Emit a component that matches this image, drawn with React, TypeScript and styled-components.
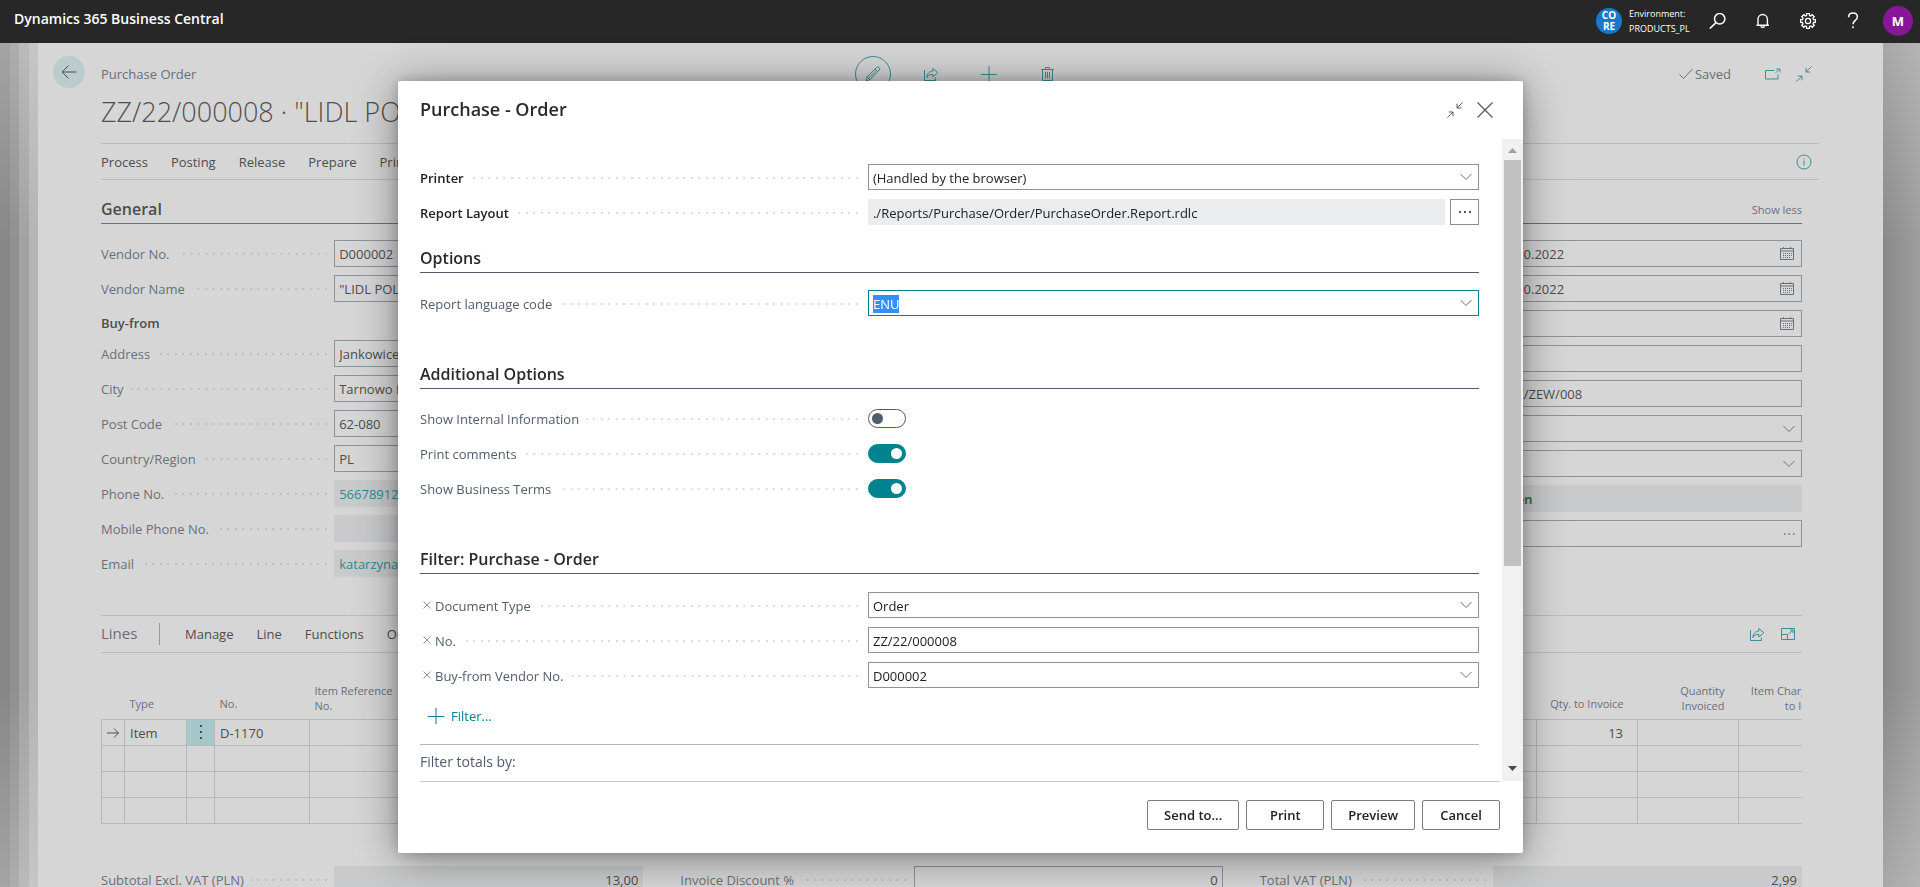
import React, { useEffect, useRef } from "react";
import styled, { createGlobalStyle, css } from "styled-components";

const GlobalStyle = createGlobalStyle`
  * { box-sizing: border-box; }
  html, body { margin: 0; height: 100%; }
  body {
    font-family: "Open Sans", "Noto Sans", "Segoe UI", sans-serif;
    font-size: 13px;
    line-height: 18px;
    color: #212121;
    background: #8a8a8a;
  }
  button, input, select { font: inherit; color: inherit; margin: 0; }
  button { cursor: pointer; }
  h1, h2, h3, p { margin: 0; font-weight: 400; }
`;

const Shell = styled.div`
  height: 100vh;
  min-height: 640px;
  overflow: hidden;
  display: flex;
  flex-direction: column;
`;

/* ---------- top bar ---------- */

const TopBar = styled.header`
  flex: none;
  height: 43px;
  padding: 0 7px 0 14px;
  background: #272727;
  color: #fff;
  display: flex;
  align-items: center;
  justify-content: space-between;
`;

const Product = styled.a`
  color: #fff;
  text-decoration: none;
  font-size: 14px;
  font-weight: 600;
  padding-bottom: 5px;
`;

const TopRight = styled.div`
  display: flex;
  align-items: center;
  padding-bottom: 2px;
`;

const EnvBadge = styled.span`
  width: 26px;
  height: 26px;
  border-radius: 50%;
  background: #1a78c8;
  font-size: 10px;
  line-height: 11px;
  font-weight: 700;
  text-align: center;
  padding-top: 2px;
`;

const EnvText = styled.span`
  width: 60px;
  margin: 0 6px 0 7px;
  font-size: 9px;
  line-height: 15px;
  white-space: nowrap;
`;

const TopButton = styled.button`
  width: 45px;
  height: 40px;
  padding: 0;
  border: 0;
  background: none;
  color: #fff;
  display: grid;
  place-items: center;
`;

const Avatar = styled.button`
  width: 30px;
  height: 30px;
  margin-left: 8px;
  padding: 0;
  border: 0;
  border-radius: 50%;
  background: #881798;
  color: #fff;
  font-weight: 700;
`;

/* ---------- page behind the dialog ---------- */

const Stage = styled.div`
  flex: 1;
  min-height: 0;
  display: flex;
`;

const Stack = styled.div`
  display: flex;
`;

const StackedSheet = styled.div<{ $edge: string; $mid: string; $w: number }>`
  width: ${(p) => p.$w}px;
  background: linear-gradient(${(p) => `${p.$edge}, ${p.$mid} 200px, ${p.$mid} calc(100% - 200px), ${p.$edge}`});
`;

const RightEdge = styled.div`
  width: 37px;
  background:
    linear-gradient(rgba(214, 214, 214, 0.4), rgba(214, 214, 214, 0) 200px, rgba(214, 214, 214, 0) calc(100% - 200px), rgba(214, 214, 214, 0.4)),
    linear-gradient(to right, #898989, #9e9e9e);
`;

const Sheet = styled.main`
  flex: 1;
  min-width: 0;
  background: #d6d6d6;
  color: #4d4d4d;
  padding: 13px 64px 0 15px;
  display: flex;
  align-items: flex-start;
`;

const BackButton = styled.button`
  flex: none;
  width: 32px;
  height: 32px;
  margin-right: 16px;
  padding: 0;
  border: 0;
  border-radius: 50%;
  background: #bccccd;
  color: #4b5054;
  display: grid;
  place-items: center;
`;

const Content = styled.div`
  flex: 1;
  min-width: 0;
`;

const HeadRow = styled.div`
  display: grid;
  grid-template-columns: 1fr auto 1fr;
  align-items: center;
  height: 36px;
  color: #6a6f78;
`;

const HeadTools = styled.div`
  display: flex;
  align-items: center;
  gap: 22px;
`;

const IconButton = styled.button<{ $round?: boolean }>`
  width: 36px;
  height: 36px;
  padding: 0;
  background: none;
  border: 0;
  color: #3e8e92;
  display: grid;
  place-items: center;
  ${(p) => p.$round && css`
    border: 1px solid #3e8e92;
    border-radius: 50%;
  `}
`;

const SmallIconButton = styled(IconButton)`
  width: 31px;
  height: 31px;
`;

const HeadStatus = styled.div`
  display: flex;
  align-items: center;
  justify-content: flex-end;
`;

const Saved = styled.span`
  display: flex;
  align-items: center;
  gap: 2px;
  margin-right: 26px;
`;

const PageTitle = styled.h1`
  font-size: 27px;
  font-weight: 300;
  line-height: 40px;
  white-space: nowrap;
  overflow: hidden;
  color: #505050;
`;

const ActionBar = styled.nav`
  margin-top: 11px;
  height: 37px;
  border-top: 1px solid #bbbcbd;
  border-bottom: 1px solid #bbbcbd;
  display: flex;
  align-items: center;
  justify-content: space-between;
`;

const Menu = styled.div`
  display: flex;
  gap: 23px;
`;

const MenuItem = styled.button`
  padding: 0;
  border: 0;
  background: none;
  white-space: nowrap;
`;

const Inner = styled.div`
  margin-right: 17px;
`;

const TabHead = styled.div`
  height: 44px;
  padding-top: 16px;
  border-bottom: 1px solid #6c717a;
  display: flex;
  justify-content: space-between;
`;

const TabTitle = styled.h2`
  font-size: 16px;
  font-weight: 600;
  line-height: 26px;
`;

const ShowLess = styled.button`
  padding: 0;
  border: 0;
  background: none;
  font-size: 11px;
  line-height: 28px;
  color: #6a6f78;
`;

const ThreeColumns = styled.div`
  display: grid;
  grid-template-columns: repeat(3, minmax(0, 1fr));
  column-gap: 37px;
`;

const FieldColumn = styled.div`
  display: flex;
  flex-direction: column;
  gap: 8px;
`;

const GroupTitle = styled.h3`
  height: 22px;
  font-size: 13px;
  font-weight: 600;
  line-height: 26px;
`;

/* ---------- fields, used by both the page and the dialog ---------- */

const FieldRow = styled.div<{ $dialog?: boolean }>`
  display: grid;
  grid-template-columns: ${(p) => (p.$dialog ? "423fr 577fr" : "43fr 57fr")};
  align-items: center;
  height: ${(p) => (p.$dialog ? 26 : 27)}px;
`;

const LabelCell = styled.div<{ $dialog?: boolean }>`
  min-width: 0;
  display: flex;
  align-items: center;
  gap: 7px;
  padding-right: ${(p) => (p.$dialog ? 10 : 7)}px;
  padding-top: ${(p) => (p.$dialog ? 2 : 1)}px;
  color: ${(p) => (p.$dialog ? "#505c6d" : "#6a7078")};
  white-space: nowrap;
`;

const Label = styled.label<{ $strong?: boolean }>`
  ${(p) => p.$strong && css`
    font-weight: 600;
    color: #212121;
  `}
`;

/* Leader dots: two per 15px tile, counted from the right edge. */
const Dots = styled.span<{ $dialog?: boolean }>`
  flex: 1;
  height: 2px;
  color: ${(p) => (p.$dialog ? "#d9dbde" : "#bdbec0")};
  background: linear-gradient(
      to right,
      transparent 5px,
      currentColor 5px 7px,
      transparent 7px 13px,
      currentColor 13px 15px
    )
    right top / 15px 2px repeat-x;
`;

const Control = styled.div`
  position: relative;
  min-width: 0;
  height: 100%;
  display: flex;
  gap: 5px;
`;

type Tone = "dim" | "plain" | "active" | "filled" | "dimFilled";

const boxStyle = css<{ $tone?: Tone; $right?: boolean }>`
  flex: 1;
  width: 100%;
  min-width: 0;
  height: 100%;
  padding: 1px 4px 0;
  border-radius: 0;
  outline: 0;
  appearance: none;
  background: transparent;
  border: 1px solid #8c93a0;
  text-align: ${(p) => (p.$right ? "right" : "left")};
  ${(p) => p.$tone === "dim" && css`border-color: #8e9299;`}
  ${(p) => p.$tone === "active" && css`border-color: #00838f;`}
  ${(p) => p.$tone === "filled" && css`border-color: #ebecee; background: #ebecee;`}
  ${(p) => p.$tone === "dimFilled" && css`border-color: #c9cacc; background: #c9cacc;`}
`;

const TextBox = styled.input<{ $tone?: Tone; $right?: boolean; $color?: string; $bold?: boolean }>`
  ${boxStyle}
  color: ${(p) => p.$color || "inherit"};
  font-weight: ${(p) => (p.$bold ? 700 : 400)};
  &::selection { background: #3390ff; color: #fff; }
`;

const SelectBox = styled.select<{ $tone?: Tone; $right?: boolean }>`
  ${boxStyle}
`;

const BoxIcon = styled.span`
  position: absolute;
  right: 7px;
  top: 0;
  bottom: 0;
  display: flex;
  align-items: center;
  pointer-events: none;
  color: #6b7078;
`;

const AssistButton = styled.button`
  width: 29px;
  padding: 0;
  border: 1px solid #8c8c8c;
  background: #fff;
  display: grid;
  place-items: center;
`;

/* ---------- lines part ---------- */

const LinesBar = styled.div`
  margin-top: 38px;
  height: 38px;
  border-top: 1px solid #bbbcbd;
  border-bottom: 1px solid #bbbcbd;
  display: flex;
  align-items: center;
`;

const LinesTitle = styled.h2`
  font-size: 15px;
  color: #6a6f78;
  width: 59px;
  height: 22px;
  line-height: 20px;
  border-right: 1px solid #999;
  margin-right: 25px;
`;

const LinesTools = styled.div`
  margin-left: auto;
  margin-right: -1px;
  display: flex;
`;

const TableClip = styled.div`
  overflow: hidden;
`;

const Table = styled.table`
  table-layout: fixed;
  width: 1726px;
  border-collapse: collapse;
`;

const Th = styled.th<{ $right?: boolean }>`
  height: 66px;
  padding: 0 14px 6px 5px;
  vertical-align: bottom;
  font-weight: 400;
  font-size: 11px;
  line-height: 15px;
  color: #6a6f78;
  text-align: ${(p) => (p.$right ? "right" : "left")};
`;

const OneLine = styled.span`
  display: block;
  padding-bottom: 2px;
`;

const Td = styled.td<{ $right?: boolean; $tint?: boolean }>`
  height: 26px;
  padding: ${(p) => (p.$tint ? "0" : "2px 14px 0 5px")};
  line-height: 18px;
  border: 1px solid #b7b8bb;
  background: ${(p) => (p.$tint ? "#a5c8ca" : "none")};
  text-align: ${(p) => (p.$tint ? "center" : p.$right ? "right" : "left")};
`;

const CellIcon = styled.span`
  display: grid;
  place-items: center;
  width: 22px;
  margin-left: -5px;
`;

const RowMenu = styled.button`
  display: grid;
  place-items: center;
  width: 100%;
  height: 24px;
  padding: 0;
  border: 0;
  background: none;
`;

const Totals = styled(ThreeColumns)`
  margin-top: 42px;
`;

/* ---------- dialog ---------- */

const Overlay = styled.div`
  position: fixed;
  inset: 43px 0 0;
  padding: 38px 0 0 1px;
  display: flex;
  justify-content: center;
  align-items: flex-start;
`;

const Dialog = styled.section`
  width: min(1125px, 94vw);
  background: #fff;
  border-radius: 2px;
  box-shadow: 0 4px 44px 0 rgba(0, 0, 0, 0.42), 0 0 12px rgba(0, 0, 0, 0.2);
`;

const DialogHead = styled.div`
  height: 58px;
  padding: 0 22px;
  display: flex;
  align-items: center;
  justify-content: space-between;
`;

const DialogTitle = styled.h2`
  font-size: 18px;
  font-weight: 600;
  line-height: 26px;
  color: #2a2a2a;
  padding-bottom: 2px;
`;

const DialogTools = styled.div`
  display: flex;
  padding-right: 1px;
`;

const DialogTool = styled.button`
  width: 30px;
  height: 30px;
  padding: 0;
  border: 0;
  background: none;
  color: #5a5a5a;
  display: grid;
  place-items: center;
`;

const DialogBody = styled.div`
  display: flex;
`;

const DialogForm = styled.div`
  flex: 1;
  min-width: 0;
  padding: 25px 23px 0 22px;
`;

const Rows = styled.div`
  display: flex;
  flex-direction: column;
  gap: 9px;
`;

const Section = styled.h3<{ $top: number; $below?: number }>`
  margin-top: ${(p) => p.$top}px;
  margin-bottom: ${(p) => p.$below ?? 17}px;
  border-bottom: 1px solid #505c6d;
  font-size: 16px;
  font-weight: 600;
  line-height: 28px;
  color: #2a2a2a;
`;

const Toggle = styled.input`
  appearance: none;
  margin: 0;
  align-self: center;
  width: 38px;
  height: 19px;
  border: 1px solid #505c6d;
  border-radius: 10px;
  background: #fff;
  display: flex;
  align-items: center;
  padding: 0 3px;
  &::before {
    content: "";
    width: 11px;
    height: 11px;
    border-radius: 50%;
    background: #505c6d;
  }
  &:checked {
    background: #00838f;
    border-color: #00838f;
    justify-content: flex-end;
  }
  &:checked::before { background: #fff; }
`;

const RemoveFilter = styled.button`
  width: 15px;
  height: 18px;
  margin-right: -7px;
  padding: 0 1px 3px 0;
  border: 0;
  background: none;
  color: #8a929c;
  display: grid;
  place-items: center;
`;

const AddFilter = styled.button`
  height: 32px;
  margin-top: 12px;
  padding: 0 8px;
  border: 0;
  background: none;
  color: #00838f;
  display: flex;
  align-items: center;
  gap: 7px;
`;

const FilterTotals = styled.p`
  margin-top: 12px;
  height: 37px;
  border-top: 1px solid #b3b8c0;
  font-size: 14px;
  line-height: 34px;
  color: #505c6d;
`;

const ScrollTrack = styled.div`
  flex: none;
  width: 21px;
  padding: 9px 2px;
  background: #f1f1f1;
  display: flex;
  flex-direction: column;
  align-items: center;
`;

const ScrollThumb = styled.div`
  width: 17px;
  height: 65%;
  margin: 6px 0 auto;
  background: #c1c1c1;
`;

const DialogFoot = styled.div`
  margin: 0 23px 0 22px;
  padding: 18px 0 23px;
  border-top: 1px solid #c8c9cc;
  display: flex;
  justify-content: flex-end;
  gap: 7px;
`;

const FootButton = styled.button`
  height: 30px;
  min-width: 78px;
  padding: 0 16px;
  border: 1px solid #7e7e7e;
  border-radius: 2px;
  background: #fff;
  font-weight: 600;
`;

/* ---------- icons ---------- */

const Icon = ({ w = 16, h = 16, sw = 1, children }: { w?: number; h?: number; sw?: number; children: React.ReactNode }) => (
  <svg width={w} height={h} viewBox={`0 0 ${w} ${h}`} fill="none" stroke="currentColor" strokeWidth={sw} aria-hidden="true">
    {children}
  </svg>
);

const SearchIcon = () => <Icon w={17} sw={1.5}><circle cx="10.7" cy="5.800" r="5.200" /><path d="M7 9.600.8 15.600" /></Icon>;
const BellIcon = () => <Icon sw={1.4}><path d="M1.500 12.300h12.500M3 12.300V6.200a4.700 4.700 0 0 1 9.400 0v6.100M6 12.800a1.700 1.700 0 0 0 3.400 0" /></Icon>;
const HelpIcon = () => <Icon w={12} h={17} sw={1.5}><path d="M1.600 5.200C1.600 2.600 3.400 1 6 1s4.400 1.500 4.400 3.900c0 3.400-4.400 3.600-4.400 7.300M6 14.200v2" /></Icon>;
const GearIcon = () => {
  const pts: string[] = [];
  for (let i = 0; i < 8; i++) {
    [[-15, 5.7], [-11, 7.6], [11, 7.6], [15, 5.7]].forEach(([d, r]) => {
      const a = ((i * 45 + d) * Math.PI) / 180;
      pts.push(`${(8 + r * Math.cos(a)).toFixed(2)},${(8 + r * Math.sin(a)).toFixed(2)}`);
    });
  }
  return <Icon sw={1.3}><polygon points={pts.join(" ")} /><circle cx="8" cy="8" r="2.600" /></Icon>;
};
const BackIcon = () => <Icon><path d="M15.500 8H1M7.500 1.500 1 8l6.500 6.500" /></Icon>;
const PencilIcon = () => <Icon><path d="M1 15l1.200-4.200L11.500 1.500a1.700 1.700 0 0 1 2.600 0 1.700 1.700 0 0 1 0 2.600L4.900 13.600 1 15zM2.200 10.800l2.700 2.800M10 3l2.700 2.700M4 11.800l7-7" /></Icon>;
const ShareIcon = () => <Icon><path d="M1.500 4v10.500h10.800v-3M3.800 11.500C4.300 7.200 6.500 5.300 9.800 5.200V2.500l5 4.200-5 4.200V8.300C7 8.200 5.200 9.200 3.800 11.500z" /></Icon>;
const PlusIcon = () => <Icon><path d="M8 0v16M0 8.500h16" /></Icon>;
const TrashIcon = () => <Icon w={13}><path d="M0 3.500h13M4.500 3.500v-2h4v2M1.500 3.500v11h10v-11M4.500 6v6.500M6.500 6v6.500M8.500 6v6.500" /></Icon>;
const CheckIcon = () => <Icon w={14} h={12}><path d="M.5 6.500 4.500 10.500 13.500 1" /></Icon>;
const PopupIcon = () => <Icon w={16} h={12}><path d="M9.500 2.500h-9v8.500h12.500V6.500M10.500 5l4-4M11.500 1h3.500v3.500" /></Icon>;
const CollapseIcon = () => <Icon><path d="M15.500.5 10 6M10 1.800V6h4.200M.5 15.500 6 10M1.800 10H6v4.200" /></Icon>;
const InfoIcon = () => <Icon><circle cx="8" cy="8" r="7" /><path d="M8 6.500v5M8 4.200v1.200" /></Icon>;
const ExpandIcon = () => <Icon><path d="M1.500 2.500h13v11h-13zM1.500 8.500h6v5M8.500 8 13 4M10 4h3v3" /></Icon>;
const CalendarIcon = () => <Icon><path d="M1.500 2.500h13v11h-13zM1.500 5h13M4.500 1v1.500M11.500 1v1.500" /><path d="M4 7.500h9M4 9.500h9M4 11.500h7" strokeDasharray="1 1" /></Icon>;
const ChevronIcon = () => <Icon w={12} h={8}><path d="M.5 1 6 6.500 11.500 1" /></Icon>;
const CloseIcon = () => <Icon sw={1.3}><path d="M.5.5l15 15M15.500.5l-15 15" /></Icon>;
const SmallCloseIcon = () => <Icon w={8} h={8}><path d="M.5.5l7 7M7.500.5l-7 7" /></Icon>;
const MoreIcon = () => <Icon w={12} h={4}><path d="M0 2h2M5 2h2M10 2h2" strokeWidth="1.500" /></Icon>;
const SmallMoreIcon = () => <Icon w={12} h={4}><path d="M1 2h1.500M5.500 2H7M10 2h1.500" strokeWidth="1.500" /></Icon>;
const VerticalMoreIcon = () => <Icon w={4} h={14}><path d="M2 0v2M2 6v2M2 12v2" strokeWidth="2" /></Icon>;
const RowArrowIcon = () => <Icon w={12} h={10}><path d="M0 5h11.500M7 .5 11.500 5 7 9.500" /></Icon>;
const ScrollArrow = ({ down }: { down?: boolean }) => (
  <svg width="9" height="6" viewBox="0 0 9 6" aria-hidden="true">
    <path d={down ? "M0 0h9L4.500 5z" : "M0 5h9L4.500 0z"} fill={down ? "#4a4a4a" : "#a0a0a0"} />
  </svg>
);

/* ---------- composed parts ---------- */

type PageFieldProps = {
  id: string;
  label: string;
  value?: string;
  filled?: boolean;
  color?: string;
  bold?: boolean;
  right?: boolean;
  icon?: React.ReactNode;
};

const PageField = ({ id, label, value = "", filled, color, bold, right, icon }: PageFieldProps) => (
  <FieldRow>
    <LabelCell>
      <Label htmlFor={id}>{label}</Label>
      <Dots />
    </LabelCell>
    <Control>
      <TextBox id={id} defaultValue={value} readOnly={filled} $tone={filled ? "dimFilled" : "dim"} $color={color} $bold={bold} $right={right} />
      {icon && <BoxIcon>{icon}</BoxIcon>}
    </Control>
  </FieldRow>
);

type DialogFieldProps = { id: string; label: string; strong?: boolean; removable?: boolean; children: React.ReactNode };

const DialogField = ({ id, label, strong, removable, children }: DialogFieldProps) => (
  <FieldRow $dialog>
    <LabelCell $dialog>
      {removable && <RemoveFilter aria-label={`Remove ${label}`}><SmallCloseIcon /></RemoveFilter>}
      <Label htmlFor={id} $strong={strong}>{label}</Label>
      <Dots $dialog />
    </LabelCell>
    <Control>{children}</Control>
  </FieldRow>
);

const Chevron = () => <BoxIcon><ChevronIcon /></BoxIcon>;

const teal = "#2f8a90";
const columnWidths = [23, 62, 28, 95, 203, 203, 203, 203, 203, 212, 101, 101, 89];

const GeneralGrid = styled(ThreeColumns)`
  padding-top: 16px;
`;

const GeneralFields = () => (
  <GeneralGrid>
    <FieldColumn>
      <PageField id="vendor-no" label="Vendor No." value="D000002" />
      <PageField id="vendor-name" label="Vendor Name" value={'"LIDL POLSKA"'} />
      <GroupTitle>Buy-from</GroupTitle>
      <PageField id="address" label="Address" value="Jankowice" />
      <PageField id="city" label="City" value="Tarnowo Podgórne" />
      <PageField id="post" label="Post Code" value="62-080" />
      <PageField id="country" label="Country/Region" value="PL" />
      <PageField id="phone" label="Phone No." value="566789123" filled color={teal} />
      <PageField id="mobile" label="Mobile Phone No." filled />
      <PageField id="email" label="Email" value="katarzyna.nowak" filled color={teal} />
    </FieldColumn>
    <FieldColumn />
    <FieldColumn>
      <PageField id="c1" label="Document Date" value="10.10.2022" icon={<CalendarIcon />} />
      <PageField id="c2" label="Posting Date" value="10.10.2022" icon={<CalendarIcon />} />
      <PageField id="c3" label="Due Date" icon={<CalendarIcon />} />
      <PageField id="c4" label="Vendor Order No." />
      <PageField id="c5" label="Vendor Invoice No." value="FMZ/ZEW/008" />
      <PageField id="c6" label="Purchaser Code" icon={<ChevronIcon />} />
      <PageField id="c7" label="Order Address" icon={<ChevronIcon />} />
      <PageField id="c8" label="Status" value="Open" filled bold color="#3c7a3f" />
      <PageField id="c9" label="User ID" icon={<SmallMoreIcon />} />
    </FieldColumn>
  </GeneralGrid>
);

const Background = () => (
  <Stage>
    <Stack>
      <StackedSheet $w={10} $edge="#a4a4a4" $mid="#878787" />
      <StackedSheet $w={9} $edge="#adadad" $mid="#909090" />
      <StackedSheet $w={10} $edge="#bababa" $mid="#a2a2a2" />
      <StackedSheet $w={9} $edge="#c5c5c5" $mid="#b3b5b5" />
    </Stack>
    <Sheet>
      <BackButton aria-label="Back"><BackIcon /></BackButton>
      <Content>
        <HeadRow>
          <span>Purchase Order</span>
          <HeadTools>
            <IconButton $round aria-label="Edit"><PencilIcon /></IconButton>
            <IconButton aria-label="Share"><ShareIcon /></IconButton>
            <IconButton aria-label="New"><PlusIcon /></IconButton>
            <IconButton aria-label="Delete"><TrashIcon /></IconButton>
          </HeadTools>
          <HeadStatus>
            <Saved><CheckIcon />Saved</Saved>
            <SmallIconButton aria-label="Open in new window"><PopupIcon /></SmallIconButton>
            <SmallIconButton aria-label="Collapse"><CollapseIcon /></SmallIconButton>
          </HeadStatus>
        </HeadRow>
        <PageTitle>ZZ/22/000008 · "LIDL POLSKA"</PageTitle>
        <ActionBar>
          <Menu>
            {["Process", "Posting", "Release", "Prepare", "Print"].map((m) => <MenuItem key={m}>{m}</MenuItem>)}
          </Menu>
          <SmallIconButton aria-label="Details"><InfoIcon /></SmallIconButton>
        </ActionBar>
        <Inner>
          <TabHead>
            <TabTitle>General</TabTitle>
            <ShowLess>Show less</ShowLess>
          </TabHead>
          <GeneralFields />
          <LinesBar>
            <LinesTitle>Lines</LinesTitle>
            <Menu>
              {["Manage", "Line", "Functions", "Order"].map((m) => <MenuItem key={m}>{m}</MenuItem>)}
            </Menu>
            <LinesTools>
              <SmallIconButton aria-label="Share lines"><ShareIcon /></SmallIconButton>
              <SmallIconButton aria-label="Expand lines"><ExpandIcon /></SmallIconButton>
            </LinesTools>
          </LinesBar>
          <TableClip>
            <Table>
              <colgroup>{columnWidths.map((w, i) => <col key={i} width={w} />)}</colgroup>
              <thead>
                <tr>
                  <Th />
                  <Th><OneLine>Type</OneLine></Th>
                  <Th />
                  <Th><OneLine>No.</OneLine></Th>
                  <Th>Item Reference<br />No.</Th>
                  <Th /><Th /><Th /><Th /><Th />
                  <Th $right><OneLine>Qty. to Invoice</OneLine></Th>
                  <Th $right>Quantity<br />Invoiced</Th>
                  <Th $right>Item Charge<br />to Inv</Th>
                </tr>
              </thead>
              <tbody>
                {[0, 1, 2, 3].map((r) => (
                  <tr key={r}>
                    <Td>{r === 0 && <CellIcon><RowArrowIcon /></CellIcon>}</Td>
                    <Td>{r === 0 && "Item"}</Td>
                    <Td $tint={r === 0}>{r === 0 && <RowMenu aria-label="Row menu"><VerticalMoreIcon /></RowMenu>}</Td>
                    <Td>{r === 0 && "D-1170"}</Td>
                    <Td /><Td /><Td /><Td /><Td /><Td />
                    <Td $right>{r === 0 && "13"}</Td>
                    <Td /><Td />
                  </tr>
                ))}
              </tbody>
            </Table>
          </TableClip>
          <Totals>
            <PageField id="subtotal" label="Subtotal Excl. VAT (PLN)" value="13,00" filled right />
            <PageField id="discount" label="Invoice Discount %" value="0" right />
            <PageField id="vat" label="Total VAT (PLN)" value="2,99" filled right />
          </Totals>
        </Inner>
      </Content>
    </Sheet>
    <RightEdge />
  </Stage>
);

const RequestDialog = () => {
  const language = useRef<HTMLInputElement>(null);
  useEffect(() => {
    language.current?.focus();
    language.current?.select();
  }, []);
  return (
    <Overlay>
      <Dialog role="dialog" aria-labelledby="dialog-title">
        <DialogHead>
          <DialogTitle id="dialog-title">Purchase - Order</DialogTitle>
          <DialogTools>
            <DialogTool aria-label="Collapse dialog"><CollapseIcon /></DialogTool>
            <DialogTool aria-label="Close"><CloseIcon /></DialogTool>
          </DialogTools>
        </DialogHead>
        <DialogBody>
          <DialogForm>
            <Rows>
              <DialogField id="printer" label="Printer" strong>
                <SelectBox id="printer"><option>(Handled by the browser)</option></SelectBox>
                <Chevron />
              </DialogField>
              <DialogField id="layout" label="Report Layout" strong>
                <TextBox id="layout" readOnly $tone="filled" defaultValue="./Reports/Purchase/Order/PurchaseOrder.Report.rdlc" />
                <AssistButton aria-label="Choose layout"><MoreIcon /></AssistButton>
              </DialogField>
            </Rows>
            <Section $top={19}>Options</Section>
            <DialogField id="language" label="Report language code">
              <TextBox ref={language} id="language" $tone="active" defaultValue="ENU" />
              <Chevron />
            </DialogField>
            <Section $top={44} $below={16}>Additional Options</Section>
            <Rows>
              <DialogField id="internal" label="Show Internal Information"><Toggle type="checkbox" id="internal" /></DialogField>
              <DialogField id="comments" label="Print comments"><Toggle type="checkbox" id="comments" defaultChecked /></DialogField>
              <DialogField id="terms" label="Show Business Terms"><Toggle type="checkbox" id="terms" defaultChecked /></DialogField>
            </Rows>
            <Section $top={44} $below={18}>Filter: Purchase - Order</Section>
            <Rows>
              <DialogField id="doc-type" label="Document Type" removable>
                <SelectBox id="doc-type"><option>Order</option></SelectBox>
                <Chevron />
              </DialogField>
              <DialogField id="doc-no" label="No." removable>
                <TextBox id="doc-no" defaultValue="ZZ/22/000008" />
              </DialogField>
              <DialogField id="buy-from" label="Buy-from Vendor No." removable>
                <TextBox id="buy-from" defaultValue="D000002" />
                <Chevron />
              </DialogField>
            </Rows>
            <AddFilter><PlusIcon />Filter...</AddFilter>
            <FilterTotals>Filter totals by:</FilterTotals>
          </DialogForm>
          <ScrollTrack>
            <ScrollArrow />
            <ScrollThumb />
            <ScrollArrow down />
          </ScrollTrack>
        </DialogBody>
        <DialogFoot>
          {["Send to...", "Print", "Preview", "Cancel"].map((b) => <FootButton key={b}>{b}</FootButton>)}
        </DialogFoot>
      </Dialog>
    </Overlay>
  );
};

export default function App() {
  return (
    <Shell>
      <GlobalStyle />
      <TopBar>
        <Product href="#">Dynamics 365 Business Central</Product>
        <TopRight>
          <EnvBadge>CO<br />RE</EnvBadge>
          <EnvText>Environment:<br />PRODUCTS_PL</EnvText>
          <TopButton aria-label="Search"><SearchIcon /></TopButton>
          <TopButton aria-label="Notifications"><BellIcon /></TopButton>
          <TopButton aria-label="Settings"><GearIcon /></TopButton>
          <TopButton aria-label="Help"><HelpIcon /></TopButton>
          <Avatar aria-label="Account">M</Avatar>
        </TopRight>
      </TopBar>
      <Background />
      <RequestDialog />
    </Shell>
  );
}
